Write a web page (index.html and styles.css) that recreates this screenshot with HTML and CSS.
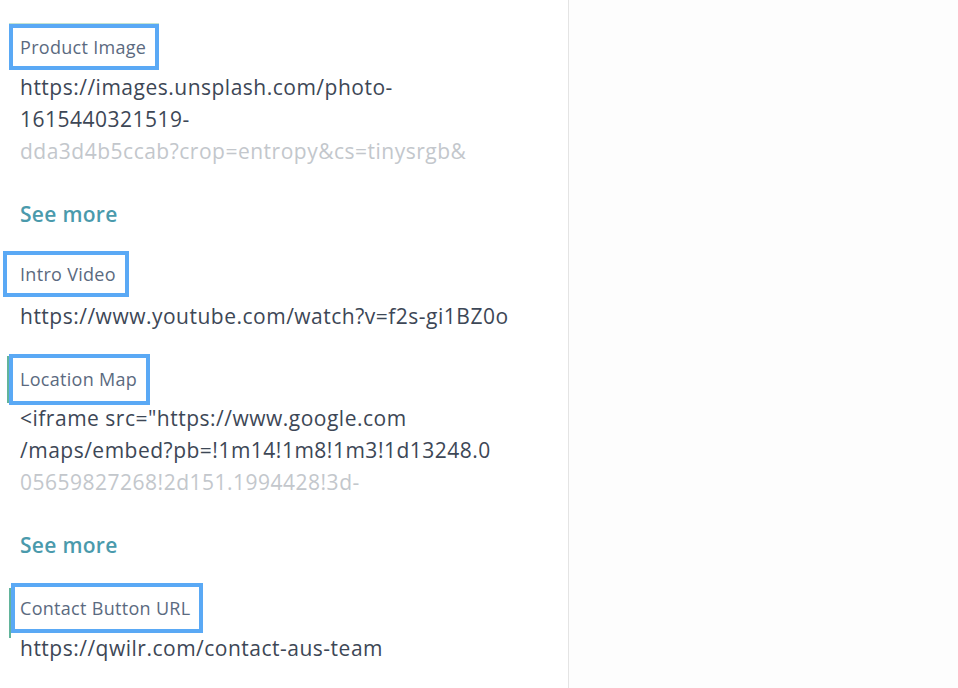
FILE: index.html
```html
<!DOCTYPE html>
<html lang="en">
<head>
    <meta charset="UTF-8">
    <meta name="viewport" content="width=device-width, initial-scale=1.0">
    <title>Fields</title>
    <link rel="stylesheet" href="styles.css">
</head>
<body>
    <div class="layout">
        <div class="fields">
            <div class="field field-image">
                <div class="field-label">Product Image</div>
                <div class="field-value clamped">
                    https://images.unsplash.com/photo-<br>
                    1615440321519-<br>
                    <span class="faded">dda3d4b5ccab?crop=entropy&amp;cs=tinysrgb&amp;</span>
                </div>
                <a class="see-more" href="#">See more</a>
            </div>

            <div class="field field-video">
                <div class="field-label">Intro Video</div>
                <div class="field-value">https://www.youtube.com/watch?v=f2s-gi1BZ0o</div>
            </div>

            <div class="field field-map">
                <div class="field-label">Location Map</div>
                <div class="field-value clamped">
                    &lt;iframe src="https://www.google.com<br>
                    /maps/embed?pb=!1m14!1m8!1m3!1d13248.0<br>
                    <span class="faded">05659827268!2d151.1994428!3d-</span>
                </div>
                <a class="see-more" href="#">See more</a>
            </div>

            <div class="field field-contact">
                <div class="field-label">Contact Button URL</div>
                <div class="field-value">https://qwilr.com/contact-aus-team</div>
            </div>
        </div>
        <div class="preview"></div>
    </div>
</body>
</html>
```

FILE: styles.css
```css
/* Field list with highlighted labels */
body {
    margin: 0;
    font-family: "Open Sans", Lato, sans-serif;
    background: #fdfdfd;
}
.layout {
    display: flex;
    height: 688px;
}
.fields {
    width: 568px;
    padding-top: 24px;
    background: #fff;
    border-right: 1px solid #e4e4e4;
}
.preview {
    flex: 1;
    background: #fdfdfd;
}
.field {
    margin-bottom: 21px;
}
.field-label {
    position: relative;
    display: inline-block;
    box-sizing: border-box;
    height: 46px;
    line-height: 38px;
    padding: 0 9px 0 7px;
    margin-left: 9px;
    border: 4px solid #5aa9f5;
    font-size: 18px;
    letter-spacing: 0.3px;
    color: #5b6a80;
}
.field-value {
    margin-top: 1px;
    padding-left: 20px;
    font-size: 21px;
    letter-spacing: 0.5px;
    line-height: 32px;
    color: #3d4756;
    white-space: nowrap;
}
.faded {
    color: #c3c7cc;
}
.see-more {
    display: block;
    margin-top: 31px;
    padding-left: 20px;
    font-size: 21px;
    font-weight: 600;
    letter-spacing: 0.3px;
    line-height: 32px;
    color: #4a9aac;
    text-decoration: none;
}

.field-image .field-label {
    box-shadow: 0 -1px 0 #c3e3d0;
}
.field-video {
    margin-bottom: 22px;
}
.field-video .field-label {
    margin-left: 3px;
    padding-left: 13px;
}
.field-video .field-value {
    margin-top: 3px;
}
.field-map {
    margin-bottom: 22px;
}
.field-map .field-label {
    height: 51px;
    line-height: 43px;
}
.field-map .field-label::before,
.field-contact .field-label::before {
    content: "";
    position: absolute;
    left: -6px;
    top: -2px;
    width: 2px;
    height: 47px;
    background: #62b49b;
}
.field-map .field-value {
    margin-top: -3px;
}
.field-contact .field-label {
    height: 50px;
    line-height: 42px;
    margin-left: 11px;
    padding-left: 5px;
}
.field-contact .field-label::before {
    top: 1px;
    height: 50px;
}
.field-contact .field-value {
    margin-top: -1px;
}
```
